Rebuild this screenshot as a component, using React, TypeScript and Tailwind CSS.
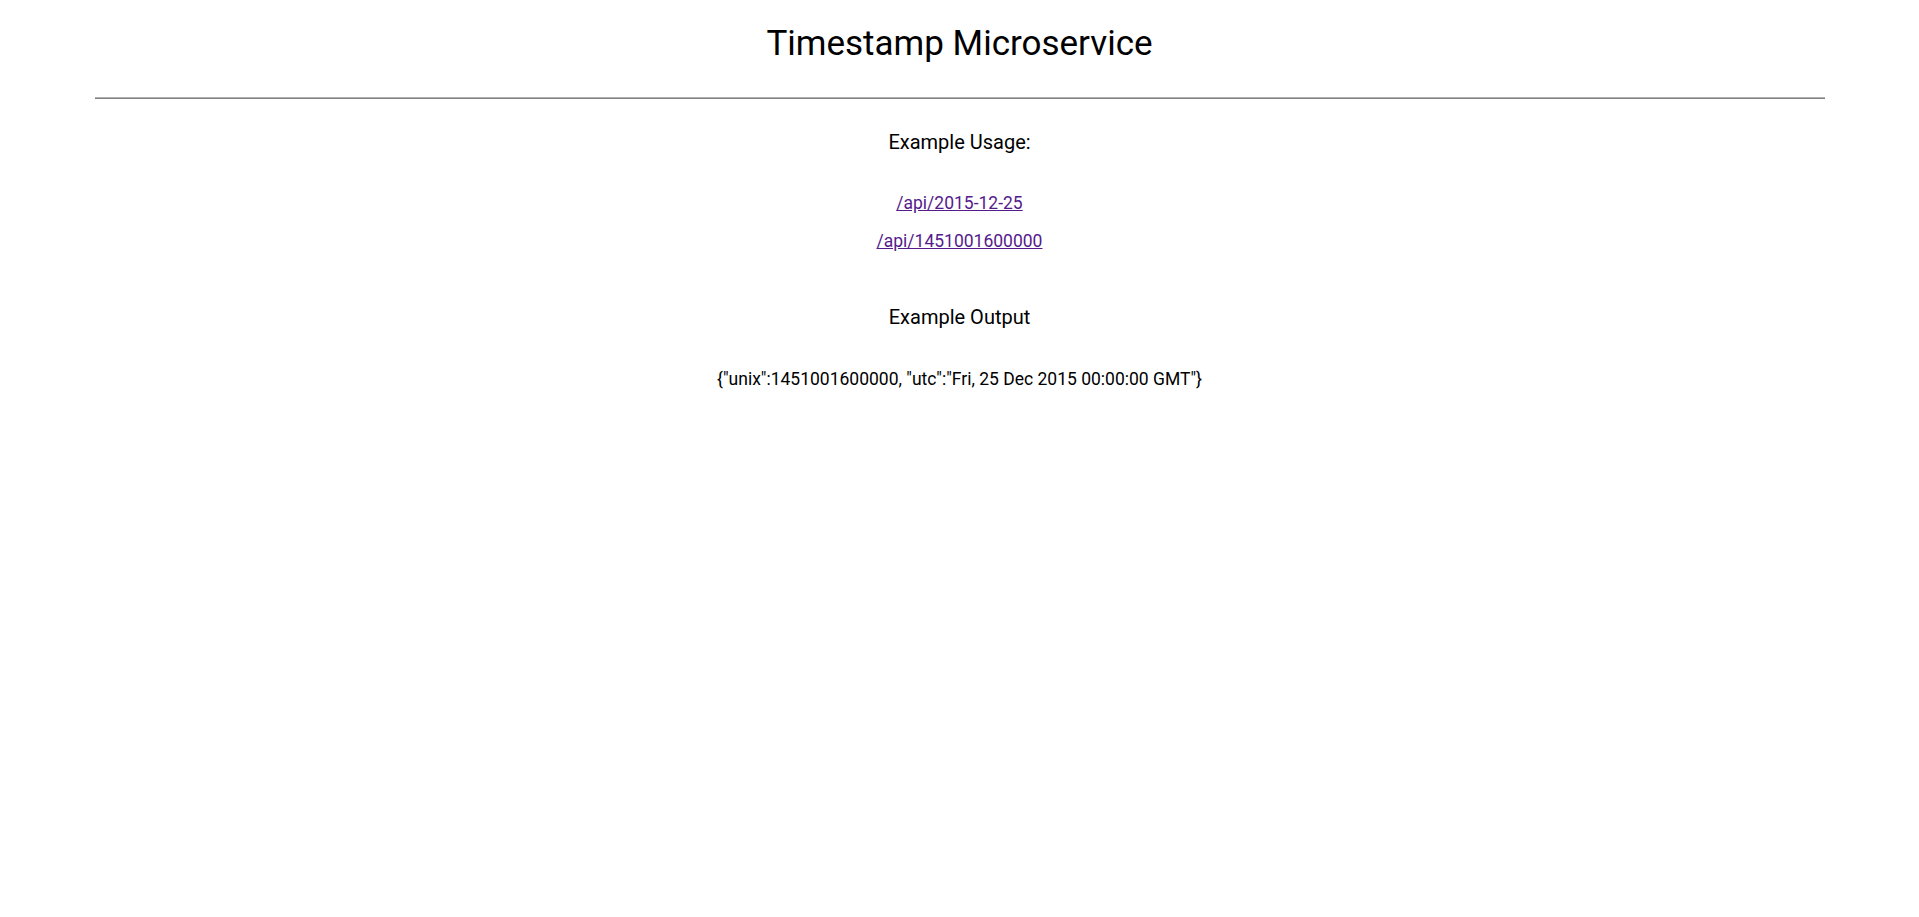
export default function App() {
  return (
    <div className="min-h-screen bg-white text-black text-center" style={{ fontFamily: 'Roboto, "Noto Sans", sans-serif' }}>
      <h1 className="text-[35px] leading-[42px] pt-[23px] pb-[32px]">Timestamp Microservice</h1>
      <div className="mx-auto w-[1730px] border-t border-b border-t-[#b0b0b0] border-b-[#808080]" />
      <h3 className="text-[20px] leading-[24px] mt-[31px]">Example Usage:</h3>
      <div className="mt-[39px] flex flex-col items-center gap-[18px] text-[17.5px] leading-[20px]">
        <a href="#" className="underline text-[#551a8b]">/api/2015-12-25</a>
        <a href="#" className="underline text-[#551a8b]">/api/1451001600000</a>
      </div>
      <h3 className="text-[20px] leading-[24px] mt-[54px]">Example Output</h3>
      <p className="text-[17.5px] leading-[20px] mt-[40px]">{'{"unix":1451001600000, "utc":"Fri, 25 Dec 2015 00:00:00 GMT"}'}</p>
    </div>
  );
}
